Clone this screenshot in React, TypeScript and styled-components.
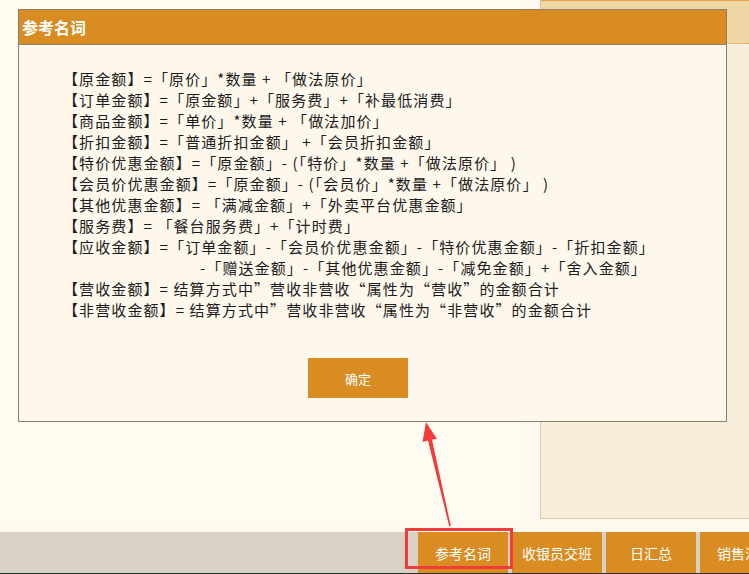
import React from 'react'
import styled, { createGlobalStyle } from 'styled-components'

const GlobalStyle = createGlobalStyle`
  html, body {
    margin: 0;
    padding: 0;
    background: #fff8ef;
    font-family: "Noto Sans CJK SC", "Noto Sans", "Liberation Sans", sans-serif;
  }
`

const Page = styled.div`
  position: relative;
  width: 749px;
  height: 574px;
  overflow: hidden;
  display: flex;
  flex-direction: column;
  background: #fff8ef;
`

const Workspace = styled.div`
  flex: 1;
  display: flex;
  gap: 20px;
  padding-bottom: 13px;
`

const LeftPanel = styled.div`
  width: 520px;
  background: #fffdf2;
`

const RightPanel = styled.div`
  flex: 1;
  height: 518px;
  background: #f7efdc;
  border-left: 1px solid #dcc9a0;
  border-bottom: 1px solid #dcc9a0;
`

const RightHead = styled.div`
  height: 42px;
  background: #f0d5a5;
  border-top: 1px solid #e4a446;
  border-bottom: 1px dotted #e09a3a;
`

const BottomBar = styled.div`
  height: 41px;
  display: flex;
  gap: 4px;
  padding-left: 418px;
  background: #d8d1c6;
  border-bottom: 1px solid #26302c;
`

const BarButton = styled.div`
  flex: 0 0 90px;
  display: flex;
  align-items: center;
  justify-content: center;
  background: #d98c21;
  color: #fff;
  font-size: 14px;
  white-space: nowrap;
  overflow: hidden;
`

const Dialog = styled.div`
  position: absolute;
  left: 18px;
  top: 9px;
  width: 707px;
  height: 411px;
  border: 1px solid #8c7f6c;
  background: #fef7ec;
  display: flex;
  flex-direction: column;
`

const DialogHead = styled.div`
  height: 34px;
  display: flex;
  align-items: center;
  padding-left: 3px;
  background: #d98c21;
  border-bottom: 1px solid #8c7f6c;
  color: #fff;
  font-size: 16px;
  font-weight: bold;
`

const DialogBody = styled.div`
  padding: 23px 0 0 44px;
`

const Line = styled.div<{ $indent?: number }>`
  height: 21px;
  line-height: 21px;
  font-size: 15px;
  letter-spacing: 1.1px;
  color: #1c1c1c;
  white-space: pre;
  padding-left: ${(p) => p.$indent ?? 0}px;
`

const ConfirmButton = styled.div`
  width: 100px;
  height: 40px;
  margin: 38px 0 0 245px;
  display: flex;
  align-items: center;
  justify-content: center;
  background: #d98c21;
  color: #fff;
  font-size: 13px;
`

const Highlight = styled.div`
  position: absolute;
  left: 405px;
  top: 528px;
  width: 102px;
  height: 35px;
  border: 3px solid #f23b3b;
`

const Overlay = styled.svg`
  position: absolute;
  left: 0;
  top: 0;
  pointer-events: none;
`

const lines: { text: string; indent?: number }[] = [
  { text: '【原金额】=「原价」*数量 + 「做法原价」' },
  { text: '【订单金额】=「原金额」+「服务费」+「补最低消费」' },
  { text: '【商品金额】=「单价」*数量 + 「做法加价」' },
  { text: '【折扣金额】=「普通折扣金额」 +「会员折扣金额」' },
  { text: '【特价优惠金额】=「原金额」- (「特价」*数量 +「做法原价」 )' },
  { text: '【会员价优惠金额】=「原金额」- (「会员价」*数量 +「做法原价」 )' },
  { text: '【其他优惠金额】= 「满减金额」+「外卖平台优惠金额」' },
  { text: '【服务费】= 「餐台服务费」+「计时费」' },
  { text: '【应收金额】=「订单金额」-「会员价优惠金额」-「特价优惠金额」-「折扣金额」' },
  { text: '-「赠送金额」-「其他优惠金额」-「减免金额」+「舍入金额」', indent: 137 },
  { text: '【营收金额】= 结算方式中”营收非营收“属性为“营收”的金额合计' },
  { text: '【非营收金额】= 结算方式中”营收非营收“属性为“非营收”的金额合计' },
]

const tabs = ['参考名词', '收银员交班', '日汇总', '销售汇总']

export default function App() {
  return (
    <>
      <GlobalStyle />
      <Page>
        <Workspace>
          <LeftPanel />
          <RightPanel>
            <RightHead />
          </RightPanel>
        </Workspace>
        <BottomBar>
          {tabs.map((t) => (
            <BarButton key={t}>{t}</BarButton>
          ))}
        </BottomBar>

        <Dialog>
          <DialogHead>参考名词</DialogHead>
          <DialogBody>
            {lines.map((l, i) => (
              <Line key={i} $indent={l.indent}>
                {l.text}
              </Line>
            ))}
            <ConfirmButton>确定</ConfirmButton>
          </DialogBody>
        </Dialog>

        <Highlight />
        <Overlay width="749" height="574" viewBox="0 0 749 574">
          <polygon
            fill="#f23b3b"
            points="426,422 437,439 432,439.5 450.8,526 449.2,526.2 428,440.5 422.6,442"
          />
        </Overlay>
      </Page>
    </>
  )
}
